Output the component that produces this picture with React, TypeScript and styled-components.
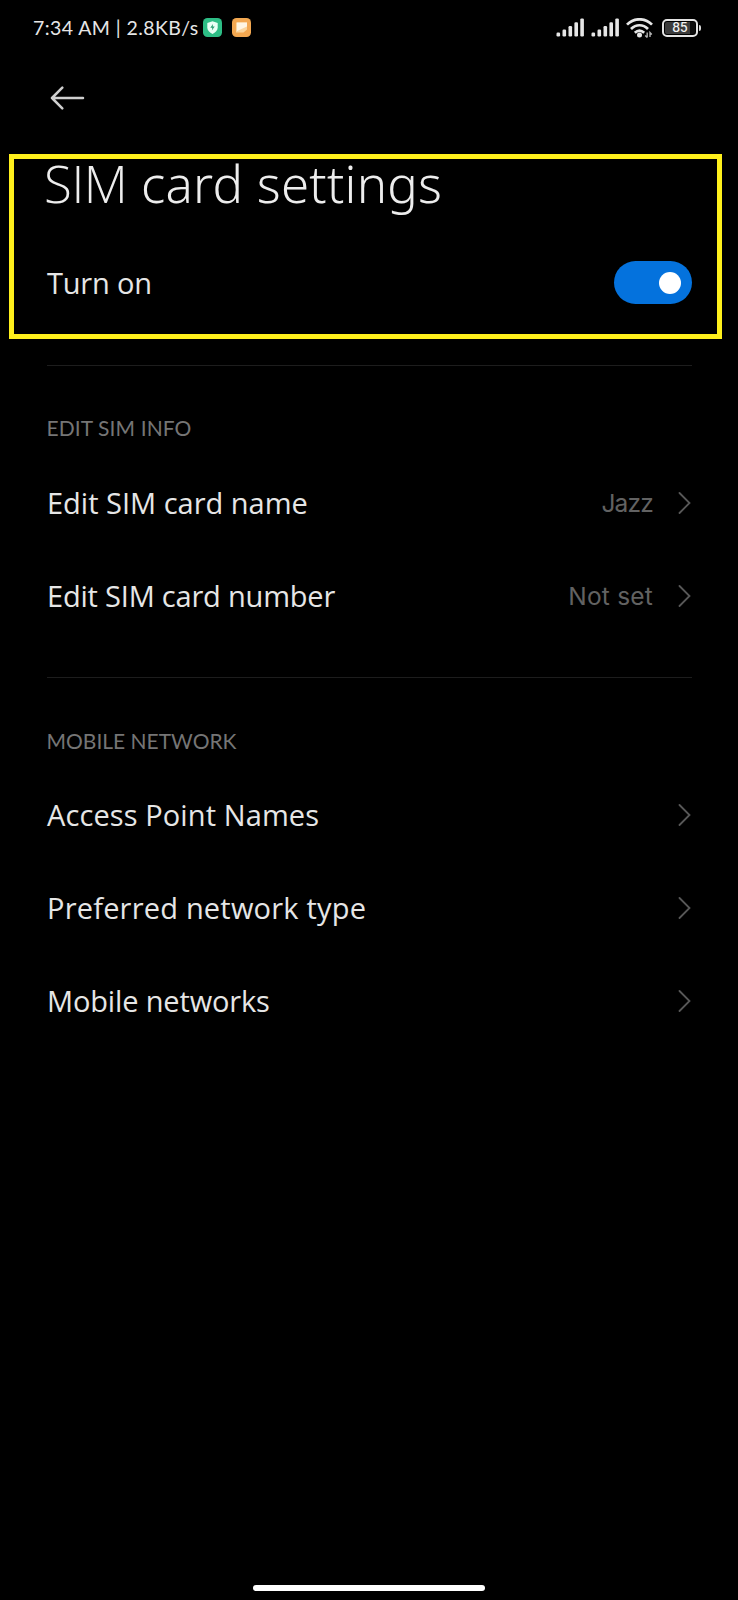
import React from "react";
import styled, { createGlobalStyle } from "styled-components";

const GlobalStyle = createGlobalStyle`
  * { box-sizing: border-box; }
  body { margin: 0; background: #000; font-family: Lato, "Open Sans", sans-serif; }
`;

const Screen = styled.main`
  width: 738px;
  height: 1600px;
  display: flex;
  flex-direction: column;
  background: #000;
  color: #e6e6e6;
  overflow: hidden;
`;

const StatusBar = styled.header`
  height: 55px;
  flex: none;
  display: flex;
  align-items: center;
  justify-content: space-between;
  padding: 0 37px 0 33px;
`;

const StatusGroup = styled.div`
  display: flex;
  align-items: center;
`;

const Clock = styled.span`
  width: 170px;
  font-size: 19.5px;
  line-height: 24px;
  letter-spacing: 0.42px;
  white-space: nowrap;
`;

const AppBadge = styled.svg`
  display: block;
  margin-right: 10px;
`;

const Signal = styled.svg`
  display: block;
  margin-right: 7px;
`;

const Battery = styled.div`
  display: flex;
  align-items: center;
  margin-left: 9px;
`;

const BatteryCell = styled.div`
  width: 36px;
  height: 18px;
  border: 2px solid #e4e4e4;
  border-radius: 5px;
  padding: 1px;
  display: flex;
`;

const BatteryFill = styled.div`
  flex: 1;
  border-radius: 2px;
  background: linear-gradient(90deg, #3c3c3c 85%, #0c0c0c 85%);
  color: #f2f2f2;
  font-family: Inter, sans-serif;
  font-size: 12.5px;
  font-weight: 500;
  line-height: 12px;
  text-align: center;
`;

const BatteryTip = styled.div`
  width: 2px;
  height: 6px;
  margin-left: 1px;
  border-radius: 0 2px 2px 0;
  background: #d8d8d8;
`;

const NavBar = styled.nav`
  height: 98px;
  flex: none;
  padding: 31px 0 0 50px;
`;

const BackButton = styled.button`
  display: block;
  padding: 0;
  border: 0;
  background: none;
  color: #cfcfcf;
  line-height: 0;
`;

const Content = styled.section`
  position: relative;
  padding: 0 46px 0 47px;
`;

const Highlight = styled.div`
  position: absolute;
  top: 1px;
  left: 9px;
  width: 713px;
  height: 185px;
  border: 5px solid #fff01c;
  pointer-events: none;
`;

const Title = styled.h1`
  margin: 0 0 23px -3px;
  font-family: "Noto Sans", sans-serif;
  font-size: 51px;
  font-weight: 300;
  line-height: 60px;
  letter-spacing: 0.25px;
  color: #ededed;
`;

const Acronym = styled.span`
  font-family: "Open Sans", sans-serif;
  letter-spacing: -0.4px;
`;

const Row = styled.div`
  height: 93px;
  display: flex;
  align-items: center;
`;

const RowLabel = styled.span<{ $tracking: number }>`
  flex: 1;
  font-family: "Open Sans", sans-serif;
  font-size: 29px;
  line-height: 36px;
  letter-spacing: ${(p) => p.$tracking}px;
`;

const RowValue = styled.span<{ $tracking: number }>`
  font-family: Inter, sans-serif;
  font-size: 24.5px;
  line-height: 32px;
  letter-spacing: ${(p) => p.$tracking}px;
  color: #626262;
  margin-right: 25px;
`;

const Toggle = styled.button`
  width: 78px;
  height: 43px;
  border: 0;
  border-radius: 22px;
  background: #0472dd;
  padding: 0 11px;
  display: flex;
  align-items: center;
  justify-content: flex-end;
`;

const Knob = styled.span`
  width: 22px;
  height: 22px;
  border-radius: 50%;
  background: #fff;
`;

const Divider = styled.hr`
  height: 1px;
  margin: 36px 0 49px;
  border: 0;
  background: #1d1d1d;

  & ~ & {
    margin: 35px 0 50px;
  }
`;

const SectionLabel = styled.h2<{ $tracking?: number }>`
  margin: 0 0 15px -0.5px;
  font-size: 21px;
  font-weight: 400;
  line-height: 26px;
  letter-spacing: ${(p) => p.$tracking ?? 0}px;
  color: #757575;

  & ~ & {
    margin-bottom: 14px;
  }
`;

const HomeArea = styled.footer`
  margin-top: auto;
  padding-bottom: 9px;
  display: flex;
  justify-content: center;
`;

const HomeBar = styled.div`
  width: 232px;
  height: 6px;
  border-radius: 3px;
  background: #fff;
`;

const SignalIcon = () => (
  <Signal width="28" height="19" viewBox="0 0 28 19" fill="#e6e6e6">
    <rect x="0.5" y="14.5" width="3.6" height="4" rx="1.2" />
    <rect x="6.5" y="11.5" width="3.6" height="7" rx="1.2" />
    <rect x="12.5" y="8" width="3.6" height="10.5" rx="1.2" />
    <rect x="18.4" y="4.2" width="3.6" height="14.3" rx="1.2" />
    <rect x="24.3" y="0.4" width="3.6" height="18.1" rx="1.2" />
  </Signal>
);

const WifiIcon = () => (
  <svg width="27" height="20" viewBox="0 0 27 20" fill="none" stroke="#e6e6e6" strokeWidth="2.7">
    <path d="M1 6.6C8-.5 19-.5 26 6.6" />
    <path d="M5 11c5-5 12-5 17 0" />
    <path d="M8.8 14.8c3-2.7 6.4-2.7 9.4 0" />
    <circle cx="13.5" cy="17" r="2.5" fill="#e6e6e6" stroke="none" />
    <path d="M21.2 14.5v5M19.2 17.5l2 2M24 19v-4.5l1.8 2" stroke="#b0b0b0" strokeWidth="1.4" />
  </svg>
);

const ChevronIcon = styled.svg`
  display: block;
  margin-right: 1px;
`;

const Chevron = () => (
  <ChevronIcon width="13" height="22" viewBox="0 0 13 22" fill="none" stroke="#585858" strokeWidth="1.8" strokeLinecap="round">
    <path d="M1.5 1L11.5 11L1.5 21" />
  </ChevronIcon>
);

type Item = { label: string; tracking: number; value?: string; valueTracking?: number };

const sections: { title: string; tracking: number; items: Item[] }[] = [
  {
    title: "EDIT SIM INFO",
    tracking: 0.1,
    items: [
      { label: "Edit SIM card name", tracking: 0, value: "Jazz", valueTracking: -0.8 },
      { label: "Edit SIM card number", tracking: -0.2, value: "Not set", valueTracking: 0.2 },
    ],
  },
  {
    title: "MOBILE NETWORK",
    tracking: 0,
    items: [
      { label: "Access Point Names", tracking: 0.1 },
      { label: "Preferred network type", tracking: 0.2 },
      { label: "Mobile networks", tracking: -0.15 },
    ],
  },
];

export default function App() {
  return (
    <Screen>
      <GlobalStyle />
      <StatusBar>
        <StatusGroup>
          <Clock>7:34 AM | 2.8KB/s</Clock>
          <AppBadge width="19" height="19" viewBox="0 0 19 19">
            <rect width="19" height="19" rx="4.5" fill="#2dbd85" />
            <path d="M9.5 3.2l5.2 1.7v4.7c0 3-2.3 5-5.2 6.3-2.9-1.3-5.2-3.3-5.2-6.3V4.9z" fill="#eafff5" />
            <path d="M10 6L7.3 9.8h2L8.9 12.6l2.8-4H9.7z" fill="#2a9d72" />
          </AppBadge>
          <AppBadge width="19" height="19" viewBox="0 0 19 19">
            <rect width="19" height="19" rx="4.5" fill="#f3a851" />
            <path d="M4 4.5h11v7l-3.5 3H4z" fill="#fbd59d" />
            <path d="M5 4.5h10v4L5 13z" fill="#fff5e2" />
          </AppBadge>
        </StatusGroup>
        <StatusGroup>
          <SignalIcon />
          <SignalIcon />
          <WifiIcon />
          <Battery>
            <BatteryCell>
              <BatteryFill>85</BatteryFill>
            </BatteryCell>
            <BatteryTip />
          </Battery>
        </StatusGroup>
      </StatusBar>
      <NavBar>
        <BackButton aria-label="Back">
          <svg width="35" height="24" viewBox="0 0 35 24" fill="none" stroke="currentColor" strokeWidth="2.5" strokeLinecap="round" strokeLinejoin="round">
            <path d="M33 12H2M12.3 1.7L2 12l10.3 10.3" />
          </svg>
        </BackButton>
      </NavBar>
      <Content>
        <Title>
          <Acronym>SIM</Acronym> card settings
        </Title>
        <Row>
          <RowLabel $tracking={-0.2}>Turn on</RowLabel>
          <Toggle role="switch" aria-checked="true" aria-label="Turn on">
            <Knob />
          </Toggle>
        </Row>
        {sections.map((s) => (
          <React.Fragment key={s.title}>
            <Divider />
            <SectionLabel $tracking={s.tracking}>{s.title}</SectionLabel>
            {s.items.map((it) => (
              <Row key={it.label}>
                <RowLabel $tracking={it.tracking}>{it.label}</RowLabel>
                {it.value && <RowValue $tracking={it.valueTracking ?? 0}>{it.value}</RowValue>}
                <Chevron />
              </Row>
            ))}
          </React.Fragment>
        ))}
        <Highlight />
      </Content>
      <HomeArea>
        <HomeBar />
      </HomeArea>
    </Screen>
  );
}
